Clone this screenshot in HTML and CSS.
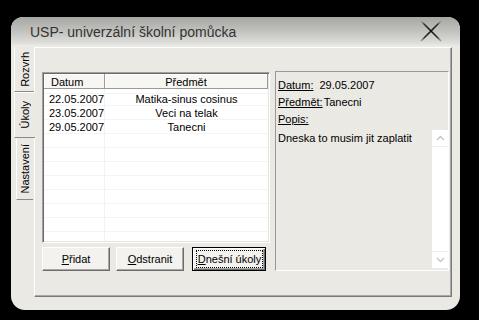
FILE: index.html
```html
<!DOCTYPE html>
<html lang="cs">
<head>
    <meta charset="UTF-8">
    <title>USP- univerzální školní pomůcka</title>
    <link rel="stylesheet" href="styles.css">
</head>
<body>

    <div class="window">
        <div class="titlebar">
            <span class="title">USP- univerzální školní pomůcka</span>
            <svg class="close" width="24" height="24" viewBox="0 0 24 24">
                <defs>
                    <radialGradient id="xfade" cx="12" cy="12" r="13" gradientUnits="userSpaceOnUse">
                        <stop offset="0" stop-color="#111"/>
                        <stop offset="0.7" stop-color="#333"/>
                        <stop offset="1" stop-color="#999"/>
                    </radialGradient>
                </defs>
                <path d="M2 2 L22 22 M22 2 L2 22" stroke="url(#xfade)" stroke-width="1.7" fill="none"/>
            </svg>
        </div>

        <div class="client">
            <div class="tabs">
                <div class="tab tab-first"><span>Rozvrh</span></div>
                <div class="tab active"><span>Úkoly</span></div>
                <div class="tab tab-last"><span>Nastavení</span></div>
            </div>

            <div class="page">
                <div class="left">
                    <div class="list">
                        <div class="list-head">
                            <span class="col-date">Datum</span>
                            <span class="col-subj">Předmět</span>
                        </div>
                        <div class="list-body">
                            <div class="row"><span class="col-date">22.05.2007</span><span class="col-subj">Matika-sinus cosinus</span></div>
                            <div class="row"><span class="col-date">23.05.2007</span><span class="col-subj">Veci na telak</span></div>
                            <div class="row"><span class="col-date">29.05.2007</span><span class="col-subj">Tanecni</span></div>
                        </div>
                    </div>
                    <div class="buttons">
                        <button class="btn btn-add"><u>P</u>řidat</button>
                        <button class="btn btn-del"><u>O</u>dstranit</button>
                        <button class="btn btn-today"><span class="focus"><u>D</u>nešní úkoly</span></button>
                    </div>
                </div>

                <div class="detail">
                    <div class="field"><u>Datum:</u><span class="val-date">29.05.2007</span></div>
                    <div class="field"><u>Předmět:</u><span class="val">Tanecni</span></div>
                    <div class="field"><u>Popis:</u></div>
                    <div class="memo">
                        <div class="memo-text">Dneska to musim jit zaplatit</div>
                        <div class="scrollbar">
                            <div class="sb-btn sb-up">
                                <svg width="9" height="6" viewBox="0 0 9 6"><path d="M1 5 L4.5 1.5 L8 5" stroke="#c4c4c4" stroke-width="1.4" fill="none"/></svg>
                            </div>
                            <div class="sb-track"></div>
                            <div class="sb-btn sb-down">
                                <svg width="9" height="6" viewBox="0 0 9 6"><path d="M1 1 L4.5 4.5 L8 1" stroke="#c4c4c4" stroke-width="1.4" fill="none"/></svg>
                            </div>
                        </div>
                    </div>
                </div>
            </div>
        </div>
    </div>

</body>
</html>
```

FILE: styles.css
```css
/* Global Styles */
body {
    margin: 0;
    background: #000;
    font-family: 'Liberation Sans', Arial, sans-serif;
    font-size: 11px;
    color: #000;
}

.window {
    margin: 17px 0 0 11px;
    width: 449px;
    height: 293px;
    background: #eae9e4;
    border-radius: 12px 12px 14px 14px;
    overflow: hidden;
    display: flex;
    flex-direction: column;
}

/* Title bar */
.titlebar {
    height: 28px;
    flex: none;
    display: flex;
    align-items: center;
    justify-content: space-between;
    padding: 0 17px 0 19px;
    background: linear-gradient(#a6a6a2, #c4c4c0 55%, #dcdcd8 90%, #e6e5e0);
}

.title {
    font-size: 14px;
    color: #333;
    padding-top: 1px;
}

.close {
    display: block;
}

/* Client area */
.client {
    flex: 1;
    display: flex;
    padding: 2px 9px 13px 3px;
}

.tabs {
    width: 20px;
    flex: none;
    display: flex;
    flex-direction: column;
}

.tab {
    display: flex;
    align-items: center;
    justify-content: center;
    border-left: 1px solid #fff;
    border-bottom: 1px solid #8a8a8a;
}

.tab span {
    writing-mode: vertical-rl;
    transform: rotate(180deg);
    line-height: 14px;
}

.tab-first {
    height: 44px;
}

.tab.active {
    height: 44px;
    margin-right: -1px;
    position: relative;
    z-index: 1;
    background: #eae9e4;
    border-top: 1px solid #fff;
}

.tab-last {
    height: 60px;
    margin: 1px 1px 0 2px;
}

.page {
    flex: 1;
    display: flex;
    align-items: flex-start;
    padding: 24px 2px 0 7px;
    border-left: 1px solid #fff;
    border-top: 1px solid #fff;
    border-right: 1px solid #7a7a7a;
    border-bottom: 1px solid #7a7a7a;
    box-shadow: inset -1px -1px 0 #a8a8a8;
}

/* List view */
.left {
    width: 228px;
    flex: none;
}

.list {
    height: 171px;
    box-sizing: border-box;
    background: #fff;
    border: 1px solid;
    border-color: #a0a0a0 #fff #fff #a0a0a0;
    box-shadow: inset 1px 1px 0 #6a6a6a, inset -1px -1px 0 #e4e3de;
    padding: 1px;
    display: flex;
    flex-direction: column;
}

.list-head {
    display: flex;
    height: 15px;
    flex: none;
    line-height: 12px;
}

.list-head span {
    box-sizing: border-box;
    padding-top: 2px;
    background: #f7f6f2;
    border-right: 1px solid #9a9a9a;
    border-bottom: 1px solid #9a9a9a;
    box-shadow: inset 1px 1px 0 #fff;
}

.list-head .col-date {
    width: 61px;
    padding-left: 7px;
}

.list-head .col-subj {
    flex: 1;
    text-align: center;
}

.list-body {
    flex: 1;
    padding-top: 3px;
    background-color: #fff;
    background-image:
        linear-gradient(#f2f2f2, #f2f2f2),
        repeating-linear-gradient(#f4f4f4 0, #f4f4f4 1px, #fff 1px, #fff 14px);
    background-size: 1px 100%, 100% 100%;
    background-position: 60px 0, 0 16px;
    background-repeat: no-repeat, repeat;
}

.row {
    display: flex;
    line-height: 14px;
}

.row .col-date {
    width: 61px;
    padding-left: 5px;
    box-sizing: border-box;
}

.row .col-subj {
    flex: 1;
    text-align: center;
}

/* Buttons */
.buttons {
    display: flex;
    margin-top: 4px;
}

.btn {
    height: 24px;
    padding: 0;
    font-family: inherit;
    font-size: 11px;
    color: #000;
    background: #f3f2ee;
    border: 1px solid;
    border-color: #fff #6c6c6c #6c6c6c #fff;
    box-shadow: inset -1px -1px 0 #a8a8a8;
}

.btn-add {
    width: 68px;
}

.btn-del {
    width: 68px;
    margin-left: 6px;
}

.btn-today {
    width: 74px;
    margin-left: 8px;
    padding: 2px 2px 2px 3px;
    display: flex;
    border-color: #000;
    box-shadow: inset 1px 1px 0 #fff, inset -1px -1px 0 #6c6c6c, inset -2px -2px 0 #a8a8a8;
}

.focus {
    flex: 1;
    display: flex;
    align-items: center;
    justify-content: center;
    border: 1px dotted #000;
}

/* Detail panel */
.detail {
    width: 174px;
    height: 200px;
    box-sizing: border-box;
    margin: -1px 0 0 5px;
    padding: 5px 0 1px 2px;
    border: 1px solid;
    border-color: #999 #fff #fff #999;
    display: flex;
    flex-direction: column;
}

.field {
    line-height: 17px;
}

.val-date {
    margin-left: 6px;
}

.val {
    margin-left: 1px;
}

.memo {
    flex: 1;
    margin-top: 2px;
    display: flex;
}

.memo-text {
    flex: 1;
    padding-top: 1px;
    line-height: 14px;
}

.scrollbar {
    width: 16px;
    background: #fff;
    display: flex;
    flex-direction: column;
}

.sb-btn {
    height: 16px;
    display: flex;
    align-items: center;
    justify-content: center;
}

.sb-up {
    border-bottom: 1px solid #eeeeec;
}

.sb-down {
    border-top: 1px solid #eeeeec;
    border-bottom: 1px solid #eeeeec;
}

.sb-track {
    flex: 1;
}
```
